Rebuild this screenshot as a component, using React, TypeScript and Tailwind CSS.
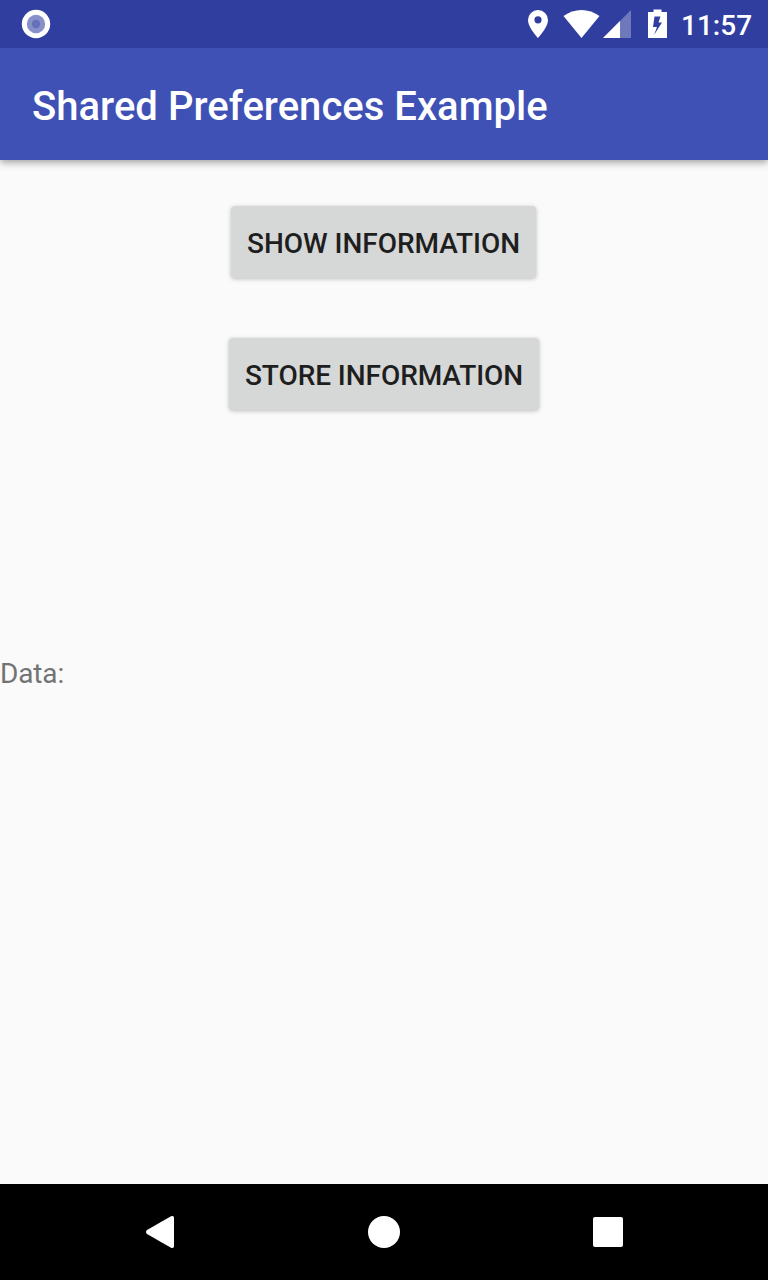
export default function App() {
  return (
    <div className="flex h-[1280px] w-[768px] flex-col overflow-hidden bg-[#fafafa] font-['Roboto',sans-serif]">
      <header className="z-10 bg-[#3f51b5] text-white shadow-[0_2px_8px_rgba(0,0,0,0.4)]">
        <div className="flex h-12 items-center bg-[#303f9f] pl-5">
          <svg className="size-8" viewBox="0 0 32 32">
            <circle cx="16" cy="16" r="14.200" fill="#fff" />
            <circle cx="16" cy="16" r="9.200" fill="#8790c8" />
            <circle cx="16" cy="16" r="4.200" fill="#6571b8" />
          </svg>
          <svg className="ml-[468px] h-12 w-[150px]" viewBox="520 0 150 48">
            <path fill="#fff" fillRule="evenodd" d="M538 10a10 10 0 0 0-10 10c0 7.500 10 18 10 18s10-10.500 10-18a10 10 0 0 0-10-10zm0 6.200a3.600 3.600 0 1 1 0 7.200 3.600 3.600 0 0 1 0-7.200z" />
            <path fill="#fff" d="M563.500 16c11-8 25-8 36 0L581.500 38z" />
            <path fill="#fff" fillOpacity=".3" d="M603 38L631 10V38z" />
            <path fill="#fff" d="M603 38L620 21V38z" />
            <path fill="#fff" fillRule="evenodd" d="M653.500 9.500h8V12H667v26h-19V12h5.500zM654.500 16.500L653 27h4l-3 8 8-12.500h-3.500l2-6z" />
          </svg>
          <span className="ml-[11px] pt-[3px] text-[28px] font-medium">11:57</span>
        </div>
        <div className="flex h-28 items-center px-8 pt-[5px]">
          <h1 className="text-[40px] font-medium tracking-[0.03px] whitespace-nowrap">Shared Preferences Example</h1>
        </div>
      </header>
      <main className="flex flex-1 flex-col items-center pt-[46px] text-[28px]">
        <button className="mr-px h-[72px] w-[305px] rounded-[4px] bg-[#d6d7d7] pt-1 font-medium tracking-[-0.04px] whitespace-nowrap text-[#1e1e1e] shadow-[0_1px_4px_rgba(0,0,0,0.25)]">SHOW INFORMATION</button>
        <button className="mt-[60px] h-[72px] w-[310px] rounded-[4px] bg-[#d6d7d7] pt-1 font-medium tracking-[-0.06px] whitespace-nowrap text-[#1e1e1e] shadow-[0_1px_4px_rgba(0,0,0,0.25)]">STORE INFORMATION</button>
        <p className="mt-[244px] self-start leading-10 tracking-[-0.15px] text-[#737373]">Data:</p>
      </main>
      <nav className="flex h-24 items-center bg-black">
        <svg className="h-24 w-[768px]" viewBox="0 0 768 96" fill="#fff">
          <path d="M147 46L171 32.300Q174 31 174 34V62Q174 65 171 63.700L147 50Q145 48 147 46Z" />
          <circle cx="384" cy="48" r="16" />
          <rect x="593" y="33" width="30" height="30" rx="2" />
        </svg>
      </nav>
    </div>
  );
}
